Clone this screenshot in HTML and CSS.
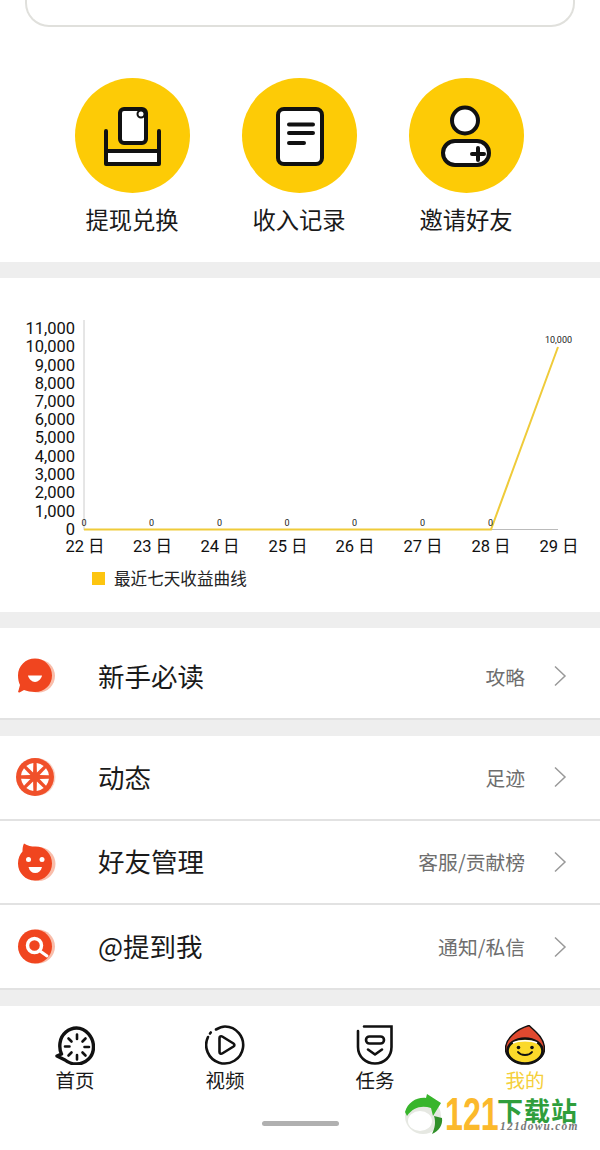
FILE: index.html
```html
<!DOCTYPE html>
<html lang="zh-CN">

<head>
    <meta charset="UTF-8">
    <meta name="viewport" content="width=device-width, initial-scale=1.0">
    <title>我的</title>
    <link rel="stylesheet" href="styles.css">
</head>
<body>
    <div class="page">
        <div class="top-card"></div>

        <div class="actions">
            <div class="action">
                <svg class="action-icon" viewBox="0 0 115 115">
                    <circle cx="57.5" cy="57.5" r="57.5" fill="#fdcb06"/>
                    <rect x="31" y="73" width="53" height="13" fill="#fff"/>
                    <path d="M31 53V86H84V53M31 73H84" fill="none" stroke="#111" stroke-width="4" stroke-linecap="round" stroke-linejoin="round"/>
                    <rect x="45" y="31" width="26" height="34" rx="4" fill="#fff" stroke="#111" stroke-width="4"/>
                    <circle cx="66" cy="36" r="3.5" fill="#fff" stroke="#111" stroke-width="2"/>
                </svg>
                <span>提现兑换</span>
            </div>
            <div class="action">
                <svg class="action-icon" viewBox="0 0 115 115">
                    <circle cx="57.5" cy="57.5" r="57.5" fill="#fdcb06"/>
                    <rect x="36" y="31" width="44" height="55" rx="6" fill="#fff" stroke="#111" stroke-width="4"/>
                    <path d="M47 46.500H71M47 55H71M47 65H62" fill="none" stroke="#111" stroke-width="4" stroke-linecap="round"/>
                </svg>
                <span>收入记录</span>
            </div>
            <div class="action">
                <svg class="action-icon" viewBox="0 0 115 115">
                    <circle cx="57.5" cy="57.5" r="57.5" fill="#fdcb06"/>
                    <circle cx="56" cy="42.500" r="13" fill="#fff" stroke="#111" stroke-width="4"/>
                    <rect x="34" y="63" width="46" height="24" rx="12" fill="#fff" stroke="#111" stroke-width="4"/>
                    <path d="M69 70V82M63 76H75" fill="none" stroke="#111" stroke-width="4" stroke-linecap="round"/>
                </svg>
                <span>邀请好友</span>
            </div>
        </div>

        <div class="chart-section">
            <svg class="chart" viewBox="0 278 600 285">
                <g class="y-labels">
                    <text x="75" y="334">11,000</text>
                    <text x="75" y="352">10,000</text>
                    <text x="75" y="371">9,000</text>
                    <text x="75" y="389">8,000</text>
                    <text x="75" y="407">7,000</text>
                    <text x="75" y="425">6,000</text>
                    <text x="75" y="443">5,000</text>
                    <text x="75" y="462">4,000</text>
                    <text x="75" y="480">3,000</text>
                    <text x="75" y="498">2,000</text>
                    <text x="75" y="517">1,000</text>
                    <text x="75" y="535">0</text>
                </g>
                <path d="M84 320V530" stroke="#ccc" stroke-width="1" fill="none"/>
                <path d="M84 529.500H558" stroke="#bbb" stroke-width="1" fill="none"/>
                <path d="M84 529.500H491L558 347" stroke="#efcb3a" stroke-width="2" fill="none"/>
                <g class="point-labels">
                    <text x="84" y="526">0</text>
                    <text x="151.500" y="526">0</text>
                    <text x="219.500" y="526">0</text>
                    <text x="287" y="526">0</text>
                    <text x="354.500" y="526">0</text>
                    <text x="422.500" y="526">0</text>
                    <text x="490.500" y="526">0</text>
                    <text x="558.500" y="343">10,000</text>
                </g>
                <g class="x-labels">
                    <text x="85" y="552">22 日</text>
                    <text x="152.500" y="552">23 日</text>
                    <text x="220" y="552">24 日</text>
                    <text x="288" y="552">25 日</text>
                    <text x="355" y="552">26 日</text>
                    <text x="423" y="552">27 日</text>
                    <text x="491" y="552">28 日</text>
                    <text x="559" y="552">29 日</text>
                </g>
            </svg>
            <div class="legend">
                <span class="legend-box"></span>
                <span>最近七天收益曲线</span>
            </div>
        </div>

        <div class="list-group">
            <div class="row row-first">
                <svg class="row-icon" viewBox="0 0 40 40">
                    <circle cx="22.500" cy="20" r="16.500" fill="#f9bdaa"/>
                    <path d="M19 2.500C28.500 2.500 36 10 36 19.500S28.500 36 19 36C15 36 11 35 8 34L3.500 36.500C2 36.800 1.800 35.500 2.500 34.500L4 29C2.800 26.500 2 23 2 19.500 2 10 9.500 2.500 19 2.500Z" fill="#f0451f"/>
                    <path d="M12 19.500H26C25.500 22.500 22 26 19 26S12.500 22.500 12 19.500Z" fill="#fff"/>
                </svg>
                <span class="row-title">新手必读</span>
                <span class="row-note">攻略</span>
                <svg class="chevron" viewBox="0 0 14 22"><path d="M2 1.500L12 11L2 20.500" /></svg>
            </div>
        </div>

        <div class="list-group">
            <div class="row">
                <svg class="row-icon" viewBox="0 0 40 40">
                    <circle cx="20.500" cy="20" r="19" fill="#f9d5c9"/>
                    <circle cx="19" cy="20" r="19" fill="#f0502a"/>
                    <g fill="#fff" transform="translate(19 20)">
                        <path d="M0 -5L-3.800 -13.500A14 14 0 0 1 3.800 -13.500Z" transform="rotate(22.500)"/>
                        <path d="M0 -5L-3.800 -13.500A14 14 0 0 1 3.800 -13.500Z" transform="rotate(67.500)"/>
                        <path d="M0 -5L-3.800 -13.500A14 14 0 0 1 3.800 -13.500Z" transform="rotate(112.500)"/>
                        <path d="M0 -5L-3.800 -13.500A14 14 0 0 1 3.800 -13.500Z" transform="rotate(157.500)"/>
                        <path d="M0 -5L-3.800 -13.500A14 14 0 0 1 3.800 -13.500Z" transform="rotate(202.500)"/>
                        <path d="M0 -5L-3.800 -13.500A14 14 0 0 1 3.800 -13.500Z" transform="rotate(247.500)"/>
                        <path d="M0 -5L-3.800 -13.500A14 14 0 0 1 3.800 -13.500Z" transform="rotate(292.500)"/>
                        <path d="M0 -5L-3.800 -13.500A14 14 0 0 1 3.800 -13.500Z" transform="rotate(337.500)"/>
                    </g>
                </svg>
                <span class="row-title">动态</span>
                <span class="row-note">足迹</span>
                <svg class="chevron" viewBox="0 0 14 22"><path d="M2 1.500L12 11L2 20.500" /></svg>
            </div>
            <div class="row">
                <svg class="row-icon" viewBox="0 0 40 40">
                    <circle cx="22.500" cy="22" r="17" fill="#f9bdaa"/>
                    <path d="M8 1.500C12 4 15 4.500 19.500 4.500C29 4.500 36 12 36 21.500S28.500 38.500 19 38.500 2 31 2 21.500C2 16 4 12 6.500 9.500C6.500 6.500 6.800 3.500 8 1.500Z" fill="#f0451f"/>
                    <circle cx="12.500" cy="17.500" r="2.500" fill="#fff"/>
                    <circle cx="26" cy="17.500" r="2.500" fill="#fff"/>
                    <path d="M12.500 25H26C25 29 22.500 31 19.200 31S13.500 29 12.500 25Z" fill="#fff"/>
                </svg>
                <span class="row-title">好友管理</span>
                <span class="row-note">客服/贡献榜</span>
                <svg class="chevron" viewBox="0 0 14 22"><path d="M2 1.500L12 11L2 20.500" /></svg>
            </div>
            <div class="row row-last">
                <svg class="row-icon" viewBox="0 0 40 40">
                    <circle cx="22" cy="19.500" r="17" fill="#f9bdaa"/>
                    <circle cx="19" cy="19.500" r="17" fill="#f0451f"/>
                    <circle cx="18.500" cy="18.500" r="7" fill="none" stroke="#fff" stroke-width="3.500"/>
                    <path d="M24 24L31 29" stroke="#fff" stroke-width="3" stroke-linecap="round"/>
                </svg>
                <span class="row-title">@提到我</span>
                <span class="row-note">通知/私信</span>
                <svg class="chevron" viewBox="0 0 14 22"><path d="M2 1.500L12 11L2 20.500" /></svg>
            </div>
        </div>

        <div class="tabbar">
            <div class="tab">
                <svg class="tab-icon" viewBox="0 0 40 40">
                    <path d="M10 35C13 37.500 17 39 21.500 39 31 39 38.500 31.500 38.500 22S31 3 21.500 3C14 3 6 9 5 18C4.500 22 5 26 6.500 29L2 31Z" fill="none" stroke="#111" stroke-width="3.400" stroke-linejoin="round"/>
                    <path d="M22 9.500V14M30.500 13.500L27.500 16.500M34 22H29.500M30.500 30.500L27.500 27.500M22 34.500V30M13.500 30.500L16.500 27.500M10 21.500H14.500M13.500 13.500L16.500 16.500" fill="none" stroke="#111" stroke-width="2.600" stroke-linecap="round"/>
                </svg>
                <span>首页</span>
            </div>
            <div class="tab">
                <svg class="tab-icon" viewBox="0 0 40 40">
                    <path d="M11 4.500C14 2.800 16.500 1.500 20 1.500A18.500 18.500 0 1 1 3 12" fill="none" stroke="#111" stroke-width="2.600" stroke-linecap="round"/>
                    <path d="M5 8.500L5.800 7.500" fill="none" stroke="#111" stroke-width="2.600" stroke-linecap="round"/>
                    <path d="M14.500 13C14.500 11.500 16 10.800 17.200 11.500L28.500 18.500C29.700 19.300 29.700 20.700 28.500 21.500L17.200 28.500C16 29.200 14.500 28.500 14.500 27Z" fill="none" stroke="#111" stroke-width="2.600" stroke-linejoin="round"/>
                </svg>
                <span>视频</span>
            </div>
            <div class="tab">
                <svg class="tab-icon" viewBox="0 0 40 40">
                    <path d="M9 1.500H36.500V22C36.500 32 29 38.500 20 38.500S3 32 3 22V6" fill="none" stroke="#111" stroke-width="2.600" stroke-linecap="round"/>
                    <rect x="11" y="11.500" width="18" height="7" rx="3.500" fill="none" stroke="#111" stroke-width="2.600"/>
                    <path d="M13 24.500L20 29.500L27 24.500" fill="none" stroke="#111" stroke-width="2.600" stroke-linecap="round" stroke-linejoin="round"/>
                </svg>
                <span>任务</span>
            </div>
            <div class="tab tab-active">
                <svg class="tab-icon" viewBox="0 0 40 40">
                    <path d="M24 0.500C30 6 39.500 13 39.500 24C39.500 32 31 38.500 20 38.500S0.500 32 0.500 24C0.500 13 12 4 24 0.500Z" fill="#e0492f" stroke="#111" stroke-width="1.500"/>
                    <ellipse cx="20" cy="26" rx="17.500" ry="12.500" fill="#fbd92a" stroke="#111" stroke-width="2.600"/>
                    <path d="M8 18C14 15 26 15 32 18" fill="none" stroke="#fff" stroke-width="1.500"/>
                    <circle cx="13.500" cy="22.500" r="1.800" fill="#111"/>
                    <circle cx="27" cy="22.500" r="1.800" fill="#111"/>
                    <path d="M13 27C16 31 24 31 27 27" fill="none" stroke="#111" stroke-width="2" stroke-linecap="round"/>
                </svg>
                <span>我的</span>
            </div>
        </div>

        <div class="home-bar"></div>

        <div class="watermark">
            <svg class="wm-ball" viewBox="0 0 42 42">
                <circle cx="20" cy="22" r="18" fill="#e6e8e2"/>
                <ellipse cx="17" cy="27" rx="12" ry="10" fill="#fff"/>
                <path d="M2 18C5 8 14 3 23 4L24 0L38 9L30 22L28 14C19 11 10 13 4 22Z" fill="#38b52c"/>
                <path d="M31 22L39 24C40 31 36 37 29 40C32 34 33 28 31 22Z" fill="#2f8f28"/>
            </svg>
            <span class="wm-num">121</span>
            <div class="wm-text">
                <span class="wm-name">下载站</span>
                <span class="wm-url">121dowu.com</span>
            </div>
        </div>
    </div>
</body>
</html>
```

FILE: styles.css
```css
* {
    box-sizing: border-box;
}

body {
    margin: 0;
    padding: 0;
    background: #fff;
    font-family: "Noto Sans CJK SC", "Noto Sans", sans-serif;
    color: #1a1a1a;
}

.page {
    position: relative;
    display: flex;
    flex-direction: column;
    width: 600px;
    height: 1150px;
    overflow: hidden;
    background: #fff;
}

.top-card {
    flex: none;
    height: 27px;
    margin: 0 25px;
    border: 2px solid #e0e0dc;
    border-top: 0;
    border-radius: 0 0 24px 24px;
}

.actions {
    flex: none;
    display: flex;
    justify-content: center;
    gap: 52px;
    height: 235px;
    padding-top: 51px;
    padding-right: 2px;
}

.action {
    display: flex;
    flex-direction: column;
    align-items: center;
    width: 115px;
    font-size: 23.300px;
    line-height: 32px;
}

.action-icon {
    display: block;
    width: 115px;
    height: 115px;
    margin-bottom: 10px;
}

.chart-section {
    flex: none;
    height: 366px;
    padding-bottom: 16px;
    border-top: 16px solid #eeeeee;
    border-bottom: 16px solid #eeeeee;
}

.chart {
    display: block;
    width: 600px;
    height: 285px;
}

.chart text {
    font-family: Roboto, "Noto Sans CJK SC", sans-serif;
}

.y-labels text {
    font-size: 16.500px;
    text-anchor: end;
    fill: #111;
}

.x-labels text {
    font-size: 16.500px;
    text-anchor: middle;
    fill: #111;
}

.point-labels text {
    font-size: 9px;
    text-anchor: middle;
    fill: #222;
}

.legend {
    display: flex;
    align-items: center;
    gap: 9px;
    height: 30px;
    padding-left: 92px;
    font-size: 16.600px;
    color: #222;
}

.legend-box {
    width: 13px;
    height: 13px;
    background: #fdc510;
}

.list-group {
    flex: none;
    border-bottom: 16px solid #eeeeee;
}

.row {
    display: flex;
    align-items: center;
    height: 84.500px;
    padding-left: 16px;
    padding-right: 33px;
    border-bottom: 2px solid #e2e2e2;
}

.row-first {
    height: 92px;
    padding-top: 6px;
}

.row-last {
    height: 85px;
}

.row-icon {
    flex: none;
    width: 40px;
    height: 40px;
    margin-right: 42px;
}

.row-title {
    flex: 1;
    margin-bottom: 2px;
    font-size: 26.500px;
    color: #1a1a1a;
}

.row-note {
    font-size: 19.800px;
    color: #6e6e6e;
}

.chevron {
    flex: none;
    width: 14px;
    height: 22px;
    margin-left: 28px;
}

.chevron path {
    fill: none;
    stroke: #999;
    stroke-width: 1.500;
}

.tabbar {
    flex: none;
    display: flex;
    padding-top: 19px;
}

.tab {
    display: flex;
    flex-direction: column;
    align-items: center;
    flex: 1;
    font-size: 19.500px;
    line-height: 28px;
    color: #1a1a1a;
}

.tab-icon {
    display: block;
    width: 40px;
    height: 40px;
    margin-bottom: 1px;
}

.tab-active {
    color: #f5cf3a;
}

.home-bar {
    position: absolute;
    left: 262px;
    top: 1121px;
    width: 77px;
    height: 5px;
    border-radius: 3px;
    background: #b0b0b0;
}

.watermark {
    position: absolute;
    left: 403px;
    top: 1094px;
    display: flex;
    align-items: flex-start;
}

.wm-ball {
    flex: none;
    width: 42px;
    height: 42px;
}

.wm-num {
    flex: none;
    width: 52px;
    font-family: "Liberation Sans", sans-serif;
    font-size: 46px;
    font-weight: 700;
    line-height: 40px;
    color: #fbb92c;
    transform: scaleX(0.7);
    transform-origin: left top;
}

.wm-text {
    display: flex;
    flex-direction: column;
    align-items: flex-start;
    padding-top: 4px;
}

.wm-name {
    font-size: 26px;
    font-weight: 700;
    line-height: 23px;
    letter-spacing: 1px;
    color: #2f9e3c;
}

.wm-url {
    padding-left: 3px;
    font-family: "Liberation Serif", serif;
    font-size: 11.500px;
    font-style: italic;
    font-weight: 700;
    line-height: 10px;
    letter-spacing: 1.200px;
    color: #777;
}
```
